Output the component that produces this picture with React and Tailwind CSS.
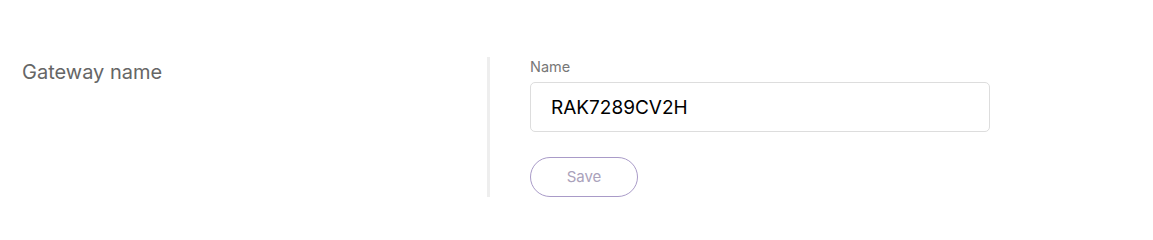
import React, { useState } from "react";

const App = () => {
  const [name, setName] = useState("RAK7289CV2H");

  return (
    <div className="w-full bg-white pt-[57px] font-['Inter',sans-serif]">
      <div className="flex">
        {/* LEFT LABEL */}
        <div className="w-[487px] shrink-0 pl-[22px]">
          <h3 className="text-[20px] leading-[30px] text-[#666666]">Gateway name</h3>
        </div>

        {/* FORM */}
        <div className="flex flex-col border-l-[3px] border-[#eeeeee] pl-[40px]">
          <label className="text-[14.5px] leading-[20px] text-[#777777]">Name</label>
          <input
            type="text"
            value={name}
            onChange={(e) => setName(e.target.value)}
            className="mt-[5px] h-[50px] w-[460px] rounded-[5px] border border-[#dddddd] px-[20px] text-[19px] text-black outline-none"
          />
          <button className="mt-[25px] h-[40px] w-[108px] rounded-full border border-[#a99bc8] text-[15px] text-[#aaa2bb]">
            Save
          </button>
        </div>
      </div>
    </div>
  );
};

export default App;
